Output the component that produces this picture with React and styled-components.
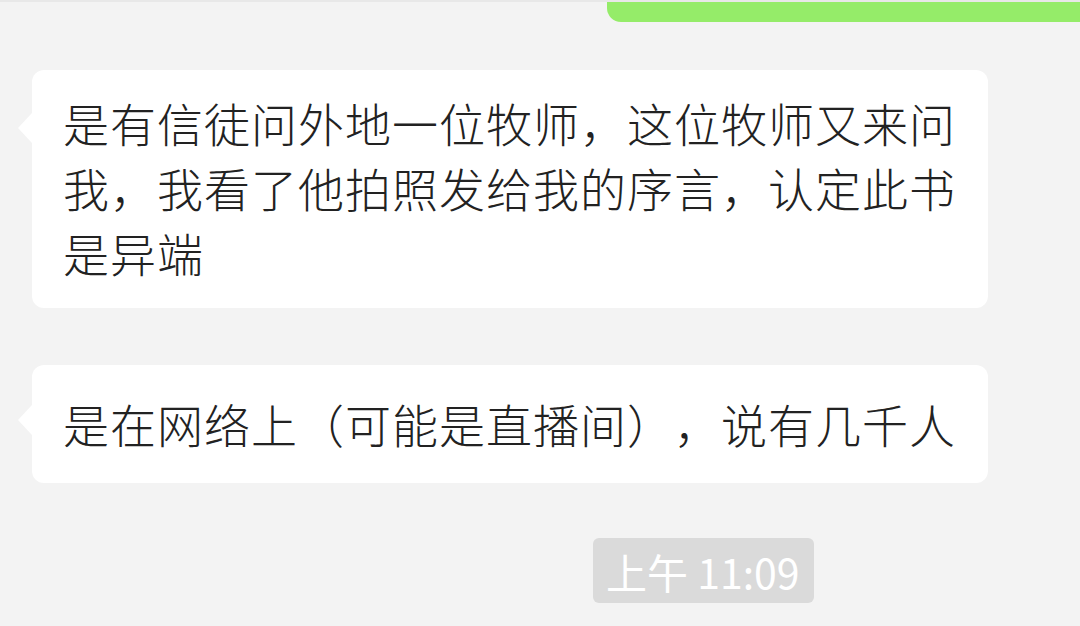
import React from "react";
import styled, { createGlobalStyle } from "styled-components";

const GlobalStyle = createGlobalStyle`
  html, body {
    margin: 0;
    padding: 0;
    background: #f3f3f3;
  }
  body {
    font-family: "Noto Sans CJK SC", "Noto Sans", sans-serif;
  }
`;

export const ChatWindow = styled.div`
  width: 1080px;
  height: 626px;
  overflow: hidden;
  background: #f3f3f3;
  border-top: 2px solid #e8e8e8;
  box-sizing: border-box;
  display: flex;
  flex-direction: column;
`;

export const SentTail = styled.div`
  align-self: flex-end;
  width: 473px;
  height: 20px;
  background: #95ec69;
  border-bottom-left-radius: 14px;
`;

export const MessageList = styled.div`
  display: flex;
  flex-direction: column;
  gap: 57px;
  padding: 48px 0 0 32px;
`;

export const Bubble = styled.div`
  position: relative;
  width: 956px;
  box-sizing: border-box;
  padding: ${(props) => props.$pad || "26px 31px"};
  background: #ffffff;
  border-radius: 12px;
  color: #222222;
  font-size: 46px;
  font-weight: 300;
  line-height: 65px;
  letter-spacing: 1px;
  text-spacing-trim: space-all;

  &::before {
    content: "";
    position: absolute;
    left: -14px;
    top: ${(props) => props.$tailTop || "44px"};
    border-top: 15px solid transparent;
    border-bottom: 15px solid transparent;
    border-right: 14px solid #ffffff;
  }
`;

export const TimeRow = styled.div`
  display: flex;
  padding-left: 593px;
  margin-top: 55px;
`;

export const TimeStamp = styled.span`
  height: 65px;
  padding: 0 14px 0 13px;
  display: flex;
  align-items: center;
  background: #dadada;
  border-radius: 6px;
  color: #ffffff;
  font-size: 41px;
`;

const messages = [
  {
    id: 1,
    text: "是有信徒问外地一位牧师，这位牧师又来问我，我看了他拍照发给我的序言，认定此书是异端",
    pad: "20px 31px 23px",
    tailTop: "43px",
  },
  {
    id: 2,
    text: "是在网络上（可能是直播间），说有几千人",
    pad: "26px 31px 27px",
    tailTop: "40px",
  },
];

const App = () => {
  return (
    <ChatWindow>
      <GlobalStyle />
      <SentTail />
      <MessageList>
        {messages.map((m) => (
          <Bubble key={m.id} $pad={m.pad} $tailTop={m.tailTop}>
            {m.text}
          </Bubble>
        ))}
      </MessageList>
      <TimeRow>
        <TimeStamp>上午 11:09</TimeStamp>
      </TimeRow>
    </ChatWindow>
  );
};

export default App;
